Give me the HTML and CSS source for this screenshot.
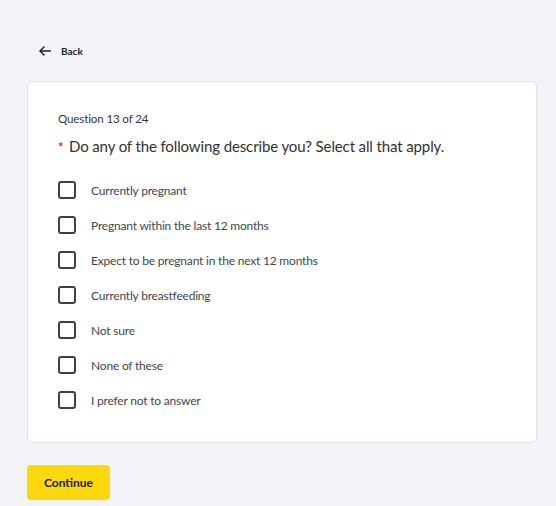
FILE: index.html
```html
<!DOCTYPE html>
<html lang="en">
<head>
<meta charset="utf-8">
<title>Question 13 of 24</title>
<link rel="stylesheet" href="styles.css">
</head>
<body>
<div class="page">
  <a class="back" href="#">
    <svg class="back-icon" width="12" height="10" viewBox="0 0 12 10" aria-hidden="true">
      <path d="M11.5 5H1.2M5 1L1 5l4 4" fill="none" stroke="#1f2328" stroke-width="1.5" stroke-linecap="round" stroke-linejoin="round"/>
    </svg>
    <span>Back</span>
  </a>
  <div class="card">
    <div class="q-count">Question 13 of 24</div>
    <div class="q-title"><span class="req">*</span>Do any of the following describe you? Select all that apply.</div>
    <div class="options">
      <label class="option"><span class="box"></span><span class="label">Currently pregnant</span></label>
      <label class="option"><span class="box"></span><span class="label">Pregnant within the last 12 months</span></label>
      <label class="option"><span class="box"></span><span class="label">Expect to be pregnant in the next 12 months</span></label>
      <label class="option"><span class="box"></span><span class="label">Currently breastfeeding</span></label>
      <label class="option"><span class="box"></span><span class="label">Not sure</span></label>
      <label class="option"><span class="box"></span><span class="label">None of these</span></label>
      <label class="option"><span class="box"></span><span class="label">I prefer not to answer</span></label>
    </div>
  </div>
  <button class="continue" type="button">Continue</button>
</div>
</body>
</html>
```

FILE: styles.css
```css
html, body {
  margin: 0;
  padding: 0;
  background: #f3f4f8;
}
body {
  font-family: "Lato", "Liberation Sans", sans-serif;
  color: #2e3236;
}
.page {
  padding: 43px 19px 0 27px;
  display: flex;
  flex-direction: column;
  align-items: flex-start;
}
.back {
  display: flex;
  align-items: center;
  gap: 10px;
  margin-left: 12px;
  height: 16px;
  text-decoration: none;
  color: #1f2328;
  font-size: 10px;
  font-weight: 700;
}
.back-icon {
  display: block;
}
.card {
  margin-top: 22px;
  align-self: stretch;
  box-sizing: border-box;
  background: #ffffff;
  border: 1px solid #e1e4ea;
  border-radius: 5px;
  padding: 29px 30px 33px 30px;
}
.q-count {
  font-size: 11.6px;
  letter-spacing: -0.15px;
  line-height: 16px;
  color: #33373b;
}
.q-title {
  margin-top: 9px;
  font-size: 15px;
  letter-spacing: -0.12px;
  line-height: 20px;
  color: #2e3236;
  display: flex;
  align-items: baseline;
}
.req {
  color: #e0284f;
  font-size: 13px;
  font-weight: 700;
  width: 11px;
  flex: none;
  letter-spacing: 0;
}
.options {
  margin-top: 24px;
  display: flex;
  flex-direction: column;
  gap: 17px;
}
.option {
  display: flex;
  align-items: center;
  gap: 15px;
  height: 18px;
}
.box {
  box-sizing: border-box;
  width: 18px;
  height: 18px;
  border: 2px solid #3d4247;
  border-radius: 3px;
  flex: none;
}
.label {
  font-size: 12px;
  letter-spacing: -0.2px;
  color: #42464b;
}
.continue {
  margin-top: 22px;
  width: 83px;
  height: 35px;
  border: none;
  border-radius: 4px;
  background: #fcd80c;
  color: #1a1a1a;
  font-family: inherit;
  font-size: 12px;
  font-weight: 700;
  padding: 0;
}
```
